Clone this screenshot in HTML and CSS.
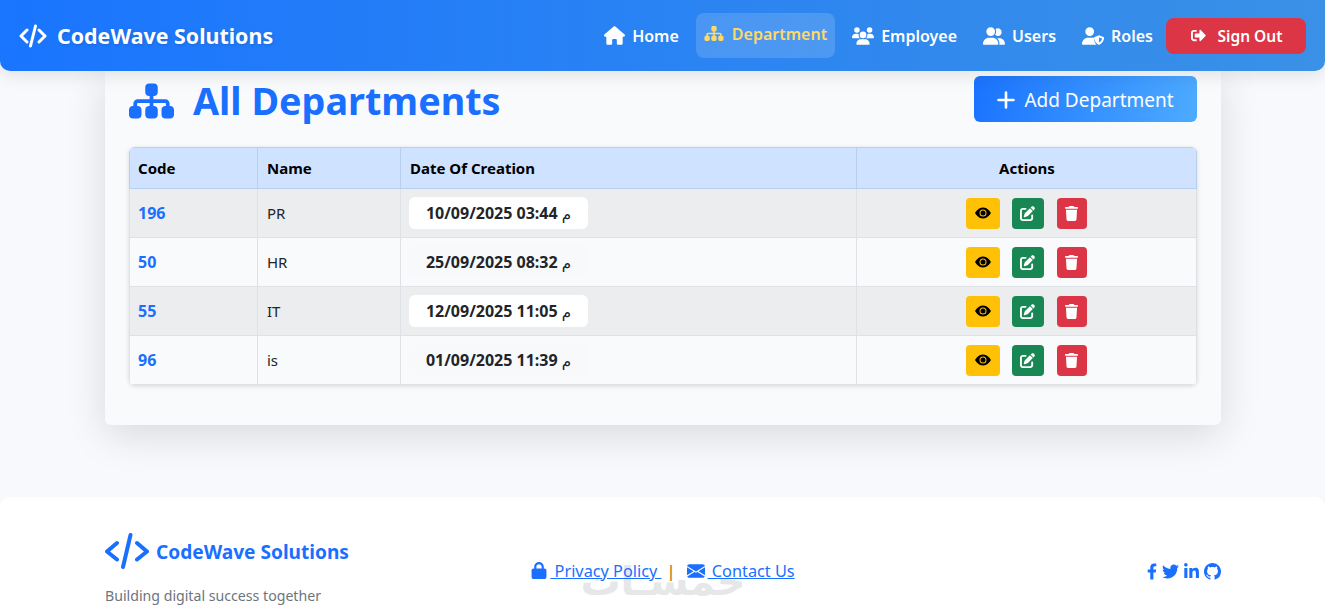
FILE: index.html
```html
<!DOCTYPE html>
<html lang="en">
<head>
<meta charset="utf-8">
<title>All Departments</title>
<link rel="stylesheet" href="styles.css">
</head>
<body>
<svg class="defs" aria-hidden="true">
  <symbol id="i-sitemap" viewBox="0 0 576 512"><path d="M208 80c0-26.500 21.500-48 48-48h64c26.500 0 48 21.500 48 48v64c0 26.500-21.500 48-48 48h-8v40H464c30.900 0 56 25.100 56 56v32h8c26.500 0 48 21.500 48 48v64c0 26.500-21.500 48-48 48H464c-26.500 0-48-21.500-48-48V368c0-26.500 21.500-48 48-48h8V288c0-4.400-3.600-8-8-8H312v40h8c26.500 0 48 21.500 48 48v64c0 26.500-21.500 48-48 48H256c-26.500 0-48-21.500-48-48V368c0-26.500 21.500-48 48-48h8V280H112c-4.400 0-8 3.600-8 8v32h8c26.500 0 48 21.500 48 48v64c0 26.500-21.500 48-48 48H48c-26.500 0-48-21.500-48-48V368c0-26.500 21.500-48 48-48h8V288c0-30.900 25.100-56 56-56H264V192h-8c-26.500 0-48-21.500-48-48V80z"/></symbol>
  <symbol id="i-eye" viewBox="0 0 16 16"><path d="M10.500 8a2.500 2.500 0 1 1-5 0 2.500 2.500 0 0 1 5 0z"/><path d="M0 8s3-5.500 8-5.500S16 8 16 8s-3 5.500-8 5.500S0 8 0 8zm8 3.500a3.500 3.500 0 1 0 0-7 3.500 3.500 0 0 0 0 7z"/></symbol>
  <symbol id="i-edit" viewBox="0 0 512 512"><path d="M471.600 21.700c-21.900-21.900-57.300-21.900-79.200 0L362.300 51.700l97.900 97.900 30.100-30.100c21.900-21.900 21.900-57.300 0-79.200L471.600 21.700zm-299.200 220c-6.100 6.100-10.800 13.600-13.500 21.900l-29.600 88.800c-2.900 8.600-.6 18.100 5.800 24.600s15.900 8.700 24.600 5.800l88.800-29.600c8.200-2.700 15.700-7.400 21.900-13.500L437.700 172.300 339.700 74.300 172.400 241.700zM96 64C43 64 0 107 0 160V416c0 53 43 96 96 96H352c53 0 96-43 96-96V320c0-17.700-14.300-32-32-32s-32 14.300-32 32v96c0 17.700-14.300 32-32 32H96c-17.700 0-32-14.300-32-32V160c0-17.700 14.300-32 32-32h96c17.700 0 32-14.300 32-32s-14.300-32-32-32H96z"/></symbol>
  <symbol id="i-trash" viewBox="0 0 448 512"><path d="M135.200 17.700L128 32H32C14.300 32 0 46.300 0 64S14.300 96 32 96H416c17.700 0 32-14.300 32-32s-14.300-32-32-32H320l-7.200-14.300C307.400 6.800 296.300 0 284.200 0H163.800c-12.100 0-23.200 6.800-28.600 17.700zM416 128H32L53.200 467c1.600 25.300 22.600 45 47.900 45H346.900c25.300 0 46.300-19.700 47.900-45L416 128z"/></symbol>
</svg>

<header class="topbar">
  <a class="brand" href="#">
    <svg class="brand-icon" viewBox="0 0 28 24"><path d="M8 6 2 12l6 6M20 6l6 6-6 6M16.500 2l-5 20"/></svg>
    <span>CodeWave Solutions</span>
  </a>
  <nav class="menu">
    <a class="menu-item home" href="#"><svg class="mi mi-home" viewBox="0 0 576 512"><path d="M575.800 255.500c0 18-15 32.100-32 32.100h-32l.7 160.200c0 2.700-.2 5.400-.5 8.100V472c0 22.100-17.900 40-40 40H456c-1.100 0-2.200 0-3.300-.1c-1.400 .1-2.800 .1-4.200 .1H416 392c-22.100 0-40-17.900-40-40V448 384c0-17.700-14.300-32-32-32H256c-17.700 0-32 14.300-32 32v64 24c0 22.100-17.900 40-40 40H160 128.100c-1.500 0-3-.1-4.500-.2c-1.200 .1-2.400 .2-3.600 .2H104c-22.100 0-40-17.900-40-40V360c0-.9 0-1.900 .1-2.800V287.600H32c-18 0-32-14-32-32.100c0-9 3-17 10-24L266.400 8c7-7 15-8 22-8s15 2 21 7L564.800 231.500c8 7 12 15 11 24z"/></svg>Home</a>
    <a class="menu-item active" href="#"><svg class="mi mi-dept"><use href="#i-sitemap"/></svg>Department</a>
    <a class="menu-item" href="#"><svg class="mi mi-wide" viewBox="0 0 640 512"><path d="M144 0a80 80 0 1 1 0 160A80 80 0 1 1 144 0zM512 0a80 80 0 1 1 0 160A80 80 0 1 1 512 0zM0 298.700C0 239.800 47.800 192 106.700 192h42.700c15.900 0 31 3.500 44.600 9.700c-1.300 7.200-1.900 14.700-1.900 22.300c0 38.200 16.800 72.500 43.300 96c-.2 0-.4 0-.7 0H21.300C9.600 320 0 310.400 0 298.700zM405.300 320c-.2 0-.4 0-.7 0c26.600-23.500 43.300-57.800 43.300-96c0-7.600-.7-15-1.900-22.300c13.600-6.300 28.700-9.700 44.600-9.700h42.700C592.200 192 640 239.800 640 298.700c0 11.800-9.600 21.300-21.300 21.300H405.300zM224 224a96 96 0 1 1 192 0 96 96 0 1 1 -192 0zM128 485.300C128 411.700 187.700 352 261.300 352H378.700C452.300 352 512 411.700 512 485.300c0 14.700-11.900 26.700-26.700 26.700H154.700c-14.700 0-26.700-11.900-26.700-26.700z"/></svg>Employee</a>
    <a class="menu-item" href="#"><svg class="mi mi-wide" viewBox="0 0 640 512"><path d="M96 128a128 128 0 1 1 256 0A128 128 0 1 1 96 128zM0 482.300C0 383.800 79.800 304 178.300 304h91.400C368.200 304 448 383.800 448 482.300c0 16.400-13.300 29.700-29.700 29.700H29.700C13.300 512 0 498.700 0 482.300zM609.300 512H471.400c5.400-9.400 8.600-20.300 8.600-32v-8c0-60.700-27.100-115.200-69.800-151.800c2.400-.1 4.700-.2 7.100-.2h61.400C567.800 320 640 392.200 640 481.300c0 17-13.800 30.700-30.700 30.700zM432 256c-31 0-59-12.600-79.300-32.900C372.400 196.500 384 163.600 384 128c0-26.800-6.600-52.100-18.300-74.300C384.300 40.100 407.200 32 432 32c61.900 0 112 50.100 112 112s-50.100 112-112 112z"/></svg>Users</a>
    <a class="menu-item" href="#"><svg class="mi mi-wide" viewBox="0 0 640 512"><path d="M224 256a128 128 0 1 0 0-256 128 128 0 0 0 0 256zM178.300 304C79.800 304 0 383.800 0 482.300 0 498.700 13.300 512 29.700 512h388.600c3 0 5.900-.4 8.600-1.300-45-35-74.900-93-74.900-166.700v-33.500c-8-2-17-6.500-82.300-6.500z"/><path fill-rule="evenodd" d="M496 236l128 50c9 3.500 16 12 16 22 0 60-28 148-132 200-8 4-16 4-24 0-104-52-132-140-132-200 0-10 7-18.500 16-22l128-50zm0 60v152c50-26 84-76 88-118z"/></svg>Roles</a>
    <a class="signout" href="#"><svg class="so-icon" viewBox="0 0 512 512"><path d="M497 273L329 441c-15 15-41 4.500-41-17v-96H152c-13.300 0-24-10.700-24-24v-96c0-13.300 10.700-24 24-24h136V88c0-21.400 25.900-32 41-17l168 168c9.300 9.400 9.300 24.600 0 34zM192 436v-40c0-6.600-5.400-12-12-12H96c-17.700 0-32-14.300-32-32V160c0-17.700 14.300-32 32-32h84c6.600 0 12-5.400 12-12V76c0-6.600-5.400-12-12-12H96c-53 0-96 43-96 96v192c0 53 43 96 96 96h84c6.600 0 12-5.400 12-12z"/></svg>Sign Out</a>
  </nav>
</header>

<main class="content">
  <section class="card">
    <div class="card-head">
      <h1 class="title"><svg class="title-icon"><use href="#i-sitemap"/></svg>All Departments</h1>
      <a class="add-btn" href="#"><svg class="plus" viewBox="0 0 18 18"><path d="M9 1.500v15M1.500 9h15"/></svg>Add Department</a>
    </div>
    <div class="table-wrap">
      <table class="dept-table">
        <colgroup><col class="c-code"><col class="c-name"><col class="c-date"><col class="c-act"></colgroup>
        <thead>
          <tr><th>Code</th><th>Name</th><th>Date Of Creation</th><th class="center">Actions</th></tr>
        </thead>
        <tbody>
          <tr>
            <td class="code">196</td><td>PR</td><td><span class="pill">10/09/2025 03:44 <span class="ampm">م</span></span></td>
            <td class="center"><div class="actions"><a class="act act-view" href="#"><svg><use href="#i-eye"/></svg></a><a class="act act-edit" href="#"><svg><use href="#i-edit"/></svg></a><a class="act act-del" href="#"><svg class="t"><use href="#i-trash"/></svg></a></div></td>
          </tr>
          <tr>
            <td class="code">50</td><td>HR</td><td><span class="pill">25/09/2025 08:32 <span class="ampm">م</span></span></td>
            <td class="center"><div class="actions"><a class="act act-view" href="#"><svg><use href="#i-eye"/></svg></a><a class="act act-edit" href="#"><svg><use href="#i-edit"/></svg></a><a class="act act-del" href="#"><svg class="t"><use href="#i-trash"/></svg></a></div></td>
          </tr>
          <tr>
            <td class="code">55</td><td>IT</td><td><span class="pill">12/09/2025 11:05 <span class="ampm">م</span></span></td>
            <td class="center"><div class="actions"><a class="act act-view" href="#"><svg><use href="#i-eye"/></svg></a><a class="act act-edit" href="#"><svg><use href="#i-edit"/></svg></a><a class="act act-del" href="#"><svg class="t"><use href="#i-trash"/></svg></a></div></td>
          </tr>
          <tr>
            <td class="code">96</td><td>is</td><td><span class="pill">01/09/2025 11:39 <span class="ampm">م</span></span></td>
            <td class="center"><div class="actions"><a class="act act-view" href="#"><svg><use href="#i-eye"/></svg></a><a class="act act-edit" href="#"><svg><use href="#i-edit"/></svg></a><a class="act act-del" href="#"><svg class="t"><use href="#i-trash"/></svg></a></div></td>
          </tr>
        </tbody>
      </table>
    </div>
  </section>
</main>

<footer class="footer">
  <div class="foot-left">
    <div class="foot-brand">
      <svg class="foot-logo" viewBox="0 0 44 36"><path d="M12 10 2 18.500l10 8M32 10l10 8.500-10 8M25.500 2 18 34"/></svg>
      <span class="foot-name">CodeWave Solutions</span>
    </div>
    <p class="tagline">Building digital success together</p>
  </div>
  <div class="foot-links">
    <a href="#"><svg class="fl fl-lock" viewBox="0 0 448 512"><path d="M144 144v48H304V144c0-44.200-35.800-80-80-80s-80 35.800-80 80zM80 192V144C80 64.500 144.500 0 224 0s144 64.500 144 144v48h16c35.300 0 64 28.700 64 64V448c0 35.300-28.700 64-64 64H64c-35.300 0-64-28.700-64-64V256c0-35.300 28.700-64 64-64H80z"/></svg> Privacy Policy </a>
    <span class="sep">|</span>
    <a href="#"><svg class="fl fl-mail" viewBox="0 0 16 16"><path d="M.05 3.555A2 2 0 0 1 2 2h12a2 2 0 0 1 1.950 1.555L8 8.414.05 3.555ZM0 4.697v7.104l5.803-3.558L0 4.697ZM6.761 8.830l-6.570 4.027A2 2 0 0 0 2 14h12a2 2 0 0 0 1.808-1.144l-6.570-4.027L8 9.586l-1.239-.757Zm3.436-.586L16 11.801V4.697l-5.803 3.546Z"/></svg> Contact Us</a>
  </div>
  <div class="socials">
    <svg class="s-fb" viewBox="0 0 320 512"><path d="M279.140 288l14.220-92.660h-88.910v-60.130c0-25.350 12.420-50.060 52.240-50.060h40.420V6.260S260.430 0 225.360 0c-73.220 0-121.080 44.380-121.080 124.720v70.620H22.890V288h81.390v224h100.170V288z"/></svg>
    <svg class="s-tw" viewBox="0 0 512 512"><path d="M459.370 151.716c.325 4.548.325 9.097.325 13.645 0 138.720-105.583 298.558-298.558 298.558-59.452 0-114.680-17.219-161.137-47.106 8.447.974 16.568 1.299 25.340 1.299 49.055 0 94.213-16.568 130.274-44.832-46.132-.975-84.792-31.188-98.112-72.772 6.498.974 12.995 1.624 19.818 1.624 9.421 0 18.843-1.300 27.614-3.573-48.081-9.747-84.143-51.980-84.143-102.985v-1.299c13.969 7.797 30.214 12.670 47.431 13.319-28.264-18.843-46.781-51.005-46.781-87.391 0-19.492 5.197-37.360 14.294-52.954 51.655 63.675 129.300 105.258 216.365 109.807-1.624-7.797-2.599-15.918-2.599-24.040 0-57.828 46.782-104.934 104.934-104.934 30.213 0 57.502 12.670 76.670 33.137 23.715-4.548 46.456-13.320 66.599-25.340-7.798 24.366-24.366 44.833-46.132 57.827 21.117-2.273 41.584-8.122 60.426-16.243-14.292 20.791-32.161 39.308-52.628 54.253z"/></svg>
    <svg class="s-in" viewBox="0 0 448 512"><path d="M100.280 448H7.400V148.900h92.880zM53.790 108.100C24.090 108.100 0 83.500 0 53.800a53.790 53.790 0 0 1 107.580 0c0 29.700-24.100 54.300-53.790 54.300zM447.900 448h-92.680V302.400c0-34.700-.7-79.200-48.290-79.200-48.290 0-55.690 37.700-55.690 76.700V448h-92.780V148.900h89.080v40.800h1.300c12.400-23.500 42.690-48.300 87.880-48.300 94 0 111.280 61.900 111.280 142.300V448z"/></svg>
    <svg class="s-gh" viewBox="0 0 16 16"><path d="M8 0C3.580 0 0 3.580 0 8c0 3.540 2.290 6.530 5.470 7.590.4.070.55-.17.55-.38 0-.19-.01-.82-.01-1.490-2.010.37-2.530-.49-2.690-.94-.09-.23-.48-.94-.82-1.130-.28-.15-.68-.52-.01-.53.630-.01 1.080.58 1.230.82.720 1.210 1.870.87 2.330.66.070-.52.280-.87.510-1.070-1.780-.2-3.640-.89-3.640-3.950 0-.87.310-1.590.820-2.150-.08-.2-.36-1.020.08-2.120 0 0 .67-.21 2.200.82.640-.18 1.320-.27 2-.27.680 0 1.360.09 2 .27 1.530-1.040 2.200-.82 2.200-.82.440 1.100.160 1.920.080 2.120.510.56.820 1.270.820 2.150 0 3.070-1.870 3.750-3.650 3.950.29.250.54.730.54 1.480 0 1.070-.01 1.930-.01 2.200 0 .21.150.46.550.38A8.012 8.012 0 0 0 16 8c0-4.420-3.580-8-8-8z"/></svg>
  </div>
  <div class="watermark" lang="ar" dir="rtl">خمسـات</div>
</footer>
</body>
</html>
```

FILE: styles.css
```css
* { box-sizing: border-box; }
html, body { margin: 0; height: 610px; overflow: hidden; }
body {
  background: #f8f9fc;
  font-family: "Noto Sans", "Open Sans", "DejaVu Sans", sans-serif;
  color: #212529;
  display: flex;
  flex-direction: column;
}
a { text-decoration: none; color: inherit; }
.defs { display: none; }

/* top bar */
.topbar {
  position: relative;
  z-index: 5;
  flex: none;
  height: 71px;
  padding: 0 19px;
  display: flex;
  align-items: center;
  justify-content: space-between;
  background: linear-gradient(90deg, #1a75ff, #3a91e6);
  border-radius: 0 0 10px 10px;
  box-shadow: 0 4px 18px rgba(0, 0, 0, .1);
}
.brand {
  display: flex;
  align-items: center;
  gap: 10px;
  color: #fff;
  font-size: 21.400px;
  font-weight: 700;
  text-shadow: 1px 1px 3px rgba(0, 0, 0, .15);
}
.brand-icon { width: 28px; height: 26px; fill: none; stroke: #fff; stroke-width: 3; stroke-linecap: round; stroke-linejoin: round; }
.menu { display: flex; align-items: center; gap: 10px; }
.menu-item {
  display: flex;
  align-items: center;
  gap: 7px;
  padding: 0 8px;
  height: 45px;
  color: #fff;
  font-size: 16px;
  font-weight: 600;
  border-radius: 8px;
}
.menu-item.home { margin-right: -1px; }
.mi { fill: currentColor; flex: none; }
.mi-home { width: 21px; height: 19px; }
.mi-dept { width: 20px; height: 17px; }
.mi-wide { width: 22px; height: 18px; }
.menu-item.active {
  margin-right: -1px;
  color: #ffd966;
  background: rgba(255, 255, 255, .15);
  gap: 8px;
  padding-bottom: 4px;
}
.signout {
  margin-left: -5px;
  width: 140px;
  height: 36px;
  display: flex;
  align-items: center;
  justify-content: center;
  gap: 11px;
  background: #dc3545;
  color: #fff;
  font-size: 15.500px;
  font-weight: 600;
  border-radius: 8px;
}
.so-icon { width: 17px; height: 15px; fill: #fff; }

/* card */
.content { flex: 1; padding: 0 104px 0 105px; }
.card {
  height: 354px;
  padding: 5px 24px 0;
  background: #f9fafc;
  border-radius: 0 0 6px 6px;
  box-shadow: 0 10px 40px rgba(0, 0, 0, .13);
}
.card-head { display: flex; align-items: center; justify-content: space-between; margin-bottom: 25px; }
.title {
  margin: 0;
  height: 46px;
  padding-top: 4px;
  display: flex;
  align-items: center;
  gap: 19px;
  color: #1a6fff;
  font-size: 37.750px;
  font-weight: 700;
  line-height: 42px;
}
.title-icon { width: 45px; height: 40px; fill: #1a6fff; }
.add-btn {
  width: 223px;
  height: 46px;
  padding-top: 2px;
  display: flex;
  align-items: center;
  justify-content: center;
  gap: 9px;
  color: #fff;
  font-size: 19px;
  background: linear-gradient(100deg, #1a73ff, #4dabff);
  border-radius: 6px;
}
.plus { width: 18px; height: 18px; fill: none; stroke: #fff; stroke-width: 2.600; stroke-linecap: round; }

/* table */
.table-wrap { border-radius: 6px; overflow: hidden; box-shadow: 0 1px 4px rgba(0, 0, 0, .15); }
.dept-table { width: 100%; border-collapse: collapse; table-layout: fixed; font-size: 15px; }
.c-code { width: 128px; }
.c-name { width: 143px; }
.c-date { width: 456px; }
.dept-table th {
  height: 41px;
  padding: 0 8px;
  text-align: left;
  color: #000;
  font-weight: 700;
  font-size: 15px;
  background: #cfe2ff;
  border: 1px solid #b9cfee;
}
.dept-table th:nth-child(n+2) { padding-left: 9px; }
.dept-table td {
  height: 49px;
  padding: 0 8px;
  border: 1px solid #dee2e6;
  color: #212529;
  background: #f9fafc;
}
.dept-table td:nth-child(2) { padding-left: 9px; }
.dept-table tbody tr:nth-child(odd) td { background: #ecedef; }
.dept-table th.center, .dept-table td.center { text-align: center; }
.dept-table td.code { color: #1a6fff; font-weight: 700; font-size: 16px; }
.pill {
  display: inline-block;
  width: 179px;
  height: 32px;
  line-height: 32px;
  text-align: center;
  font-size: 16px;
  font-weight: 700;
  white-space: nowrap;
  background: #f8f9fa;
  border-radius: 6px;
}
.ampm { font-weight: 400; font-size: 15px; }
tbody tr:nth-child(odd) .pill { background: #fff; }
.actions { display: flex; justify-content: center; gap: 12px; padding-right: 1px; }
.act { height: 31px; display: flex; align-items: center; justify-content: center; border-radius: 4px; }
.act svg { width: 16px; height: 16px; }
.act-edit svg { width: 15px; height: 15px; }
.act svg.t { width: 13px; height: 15px; }
.act-view { width: 34px; background: #ffc107; fill: #000; }
.act-edit { width: 32px; background: #198754; fill: #fff; }
.act-del { width: 30px; margin-left: 1px; background: #dc3545; fill: #fff; }

/* footer */
.footer {
  position: relative;
  flex: none;
  height: 113px;
  padding: 36px 104px 0 105px;
  display: grid;
  grid-template-columns: 1fr auto 1fr;
  background: #fff;
  border-radius: 10px 10px 0 0;
}
.foot-brand { display: flex; align-items: center; gap: 7px; color: #1a6fff; font-size: 19.100px; font-weight: 700; }
.foot-name { padding-top: 2px; }
.foot-logo { width: 44px; height: 36px; fill: none; stroke: #1a6fff; stroke-width: 4; stroke-linecap: round; stroke-linejoin: round; }
.tagline { margin: 17px 0 0; color: #6c757d; font-size: 14.150px; line-height: 20px; }
.foot-links { display: flex; align-items: center; align-self: start; height: 76px; gap: 9px; color: #1a6fff; font-size: 16.300px; }
.foot-links a { position: relative; z-index: 1; text-decoration: underline; white-space: pre; }
.fl { fill: #1a6fff; margin-right: 3px; }
.fl-lock { width: 16px; height: 17px; vertical-align: -2px; }
.fl-mail { width: 18px; height: 18px; vertical-align: -3px; }
.sep { margin: 0 2px 0 -4px; color: #c0842c; font-weight: 600; }
.socials { display: flex; justify-content: flex-end; align-items: center; align-self: start; height: 76px; gap: 5px; fill: #1a6fff; }
.s-fb { width: 10px; height: 17px; }
.s-tw { width: 17px; height: 17px; }
.s-in { width: 15px; height: 17px; }
.s-gh { width: 17px; height: 17px; }
.watermark {
  position: absolute;
  left: 573px;
  top: 59px;
  width: 180px;
  text-align: center;
  color: #e6e7e9;
  font-family: "DejaVu Sans", sans-serif;
  font-size: 40px;
  font-weight: 700;
  line-height: 50px;
  pointer-events: none;
}
```
